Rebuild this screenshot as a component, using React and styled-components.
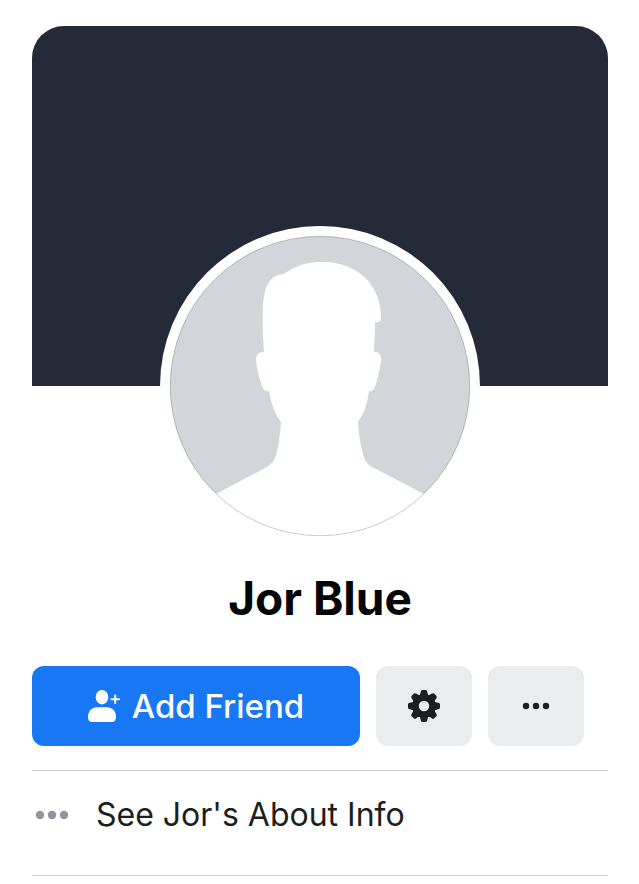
import React from "react";
import styled, { createGlobalStyle } from "styled-components";

const GlobalStyle = createGlobalStyle`
  *, *::before, *::after { box-sizing: border-box; }
  body {
    margin: 0;
    background: #ffffff;
    color: #1c1e21;
    font-family: Inter, "Liberation Sans", sans-serif;
  }
`;

const Page = styled.main`
  display: flex;
  flex-direction: column;
  padding: 26px 31px 0 32px;
`;

const Cover = styled.div`
  height: 360px;
  border-radius: 32px 32px 0 0;
  background: #242a38;
`;

const Avatar = styled.div`
  align-self: center;
  width: 320px;
  margin-top: -160px;
  padding: 10px;
  border-radius: 50%;
  background: #ffffff;

  svg {
    display: block;
    width: 100%;
  }
`;

const Name = styled.h1`
  margin: 24px 0 40px;
  font-size: 46px;
  line-height: 56px;
  font-weight: 700;
  text-align: center;
  color: #050505;
`;

const Actions = styled.div`
  display: flex;
  gap: 16px;
  padding: 0 24px 24px 0;
`;

const Button = styled.button`
  display: flex;
  align-items: center;
  justify-content: center;
  gap: 12px;
  flex: ${(p) => (p.$primary ? "1 1 auto" : "0 0 96px")};
  height: 80px;
  padding: 0;
  border: 0;
  border-radius: 12px;
  background: ${(p) => (p.$primary ? "#1877f2" : "#ebecf0")};
  color: ${(p) => (p.$primary ? "#ffffff" : "#1c1e21")};
  font-family: inherit;
  font-size: 33px;
  line-height: 40px;
  font-weight: 500;
  white-space: nowrap;
  cursor: pointer;
`;

const AboutLink = styled.a`
  display: flex;
  align-items: center;
  gap: 24px;
  padding: 24px 0 40px;
  border: solid #cbccce;
  border-width: 1px 0;
  color: #1c1e21;
  font-size: 32px;
  line-height: 40px;
  text-decoration: none;

  svg {
    color: #90949c;
  }
`;

const Silhouette = () => (
  <svg viewBox="0 0 300 300" role="img" aria-label="Jor Blue">
    <defs>
      <clipPath id="portrait">
        <circle cx="150" cy="150" r="150" />
      </clipPath>
    </defs>
    <g clipPath="url(#portrait)">
      <rect width="300" height="300" fill="#d2d6db" />
      <path
        fill="#ffffff"
        d="M46 258 L97 231 C103 228 105 223 107 215 Q110 202 111 186 Q102 174 99 155 Q95 156 93 152 Q87 138 86 123 Q86 116 94 116 Q92 91 93 70 C94 50 100 39 114 38 C125 30 137 26 150 26 C184 25 212 46 211 84 Q209 87 205 86 Q205 101 204 116 Q211 115 211 124 Q209 140 205 151 Q203 156 199 155 Q197 173 188 186 Q189 202 192 214 C194 224 197 229 204 232 L254 258 L254 300 H46 Z"
      />
    </g>
    <circle cx="150" cy="150" r="149.7" fill="none" stroke="#000000" strokeOpacity="0.3" strokeWidth="0.6" />
  </svg>
);

const AddPersonIcon = () => (
  <svg width="32" height="32" viewBox="0 0 32 32" fill="currentColor" aria-hidden="true">
    <ellipse cx="14" cy="7.2" rx="6.3" ry="7.2" />
    <path d="M0 27 C0 21 4 17.3 9 17.3 H19 C24 17.3 28 21 28 27 C28 30.5 26.5 32 24 32 H4 C1.5 32 0 30.5 0 27 Z" />
    <path d="M27.2 5.4 V13 M23.4 9.2 H31" fill="none" stroke="currentColor" strokeWidth="2" strokeLinecap="round" />
  </svg>
);

const GearIcon = () => (
  <svg width="32" height="32" viewBox="-16 -16 32 32" fill="currentColor" aria-hidden="true">
    {[0, 45, 90, 135, 180, 225, 270, 315].map((angle) => (
      <path
        key={angle}
        transform={`rotate(${angle})`}
        d="M-5 -10 C-3.9 -11 -3.6 -12.4 -3.2 -14.4 Q-2.9 -16 -1.4 -16 H1.4 Q2.9 -16 3.2 -14.4 C3.6 -12.4 3.9 -11 5 -10 Z"
      />
    ))}
    <path
      fillRule="evenodd"
      d="M0 -11.6 A11.6 11.6 0 1 1 0 11.6 A11.6 11.6 0 1 1 0 -11.6 Z M0 -5.2 A5.2 5.2 0 1 0 0 5.2 A5.2 5.2 0 1 0 0 -5.2 Z"
    />
  </svg>
);

const DotsIcon = ({ width, gap, radius }) => (
  <svg width={width} height="12" viewBox={`${-width / 2} -6 ${width} 12`} fill="currentColor" aria-hidden="true">
    <circle cx={-gap} r={radius} />
    <circle r={radius} />
    <circle cx={gap} r={radius} />
  </svg>
);

export default function App() {
  return (
    <>
      <GlobalStyle />
      <Page>
        <Cover />
        <Avatar>
          <Silhouette />
        </Avatar>
        <Name>Jor Blue</Name>
        <Actions>
          <Button type="button" $primary>
            <AddPersonIcon />
            Add Friend
          </Button>
          <Button type="button" aria-label="Settings">
            <GearIcon />
          </Button>
          <Button type="button" aria-label="More options">
            <DotsIcon width={28} gap={10} radius={3.2} />
          </Button>
        </Actions>
        <AboutLink href="#about">
          <DotsIcon width={40} gap={12} radius={4.2} />
          See Jor's About Info
        </AboutLink>
      </Page>
    </>
  );
}
